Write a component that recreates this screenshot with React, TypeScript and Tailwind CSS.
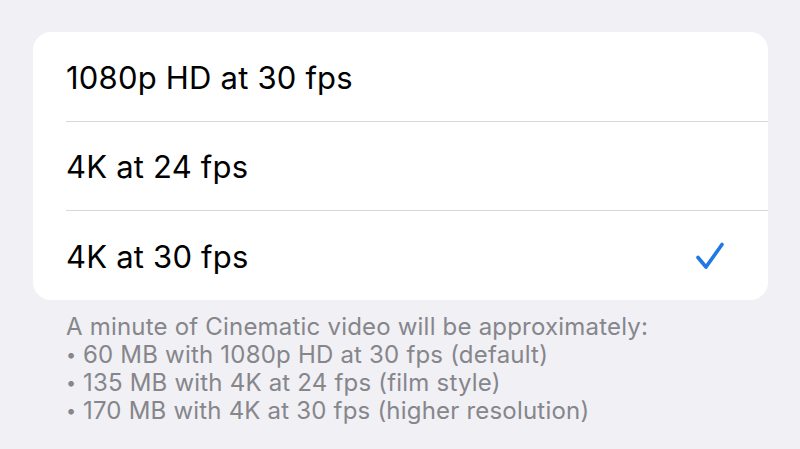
import React from 'react';

const options = [
  { label: '1080p HD at 30 fps', selected: false },
  { label: '4K at 24 fps', selected: false },
  { label: '4K at 30 fps', selected: true },
];

const notes = [
  '60 MB with 1080p HD at 30 fps (default)',
  '135 MB with 4K at 24 fps (film style)',
  '170 MB with 4K at 30 fps (higher resolution)',
];

export default function App() {
  return (
    <div
      className="w-[800px] h-[449px] overflow-hidden bg-[#f0f0f5] pt-[32px] pl-[33px] pr-[32px]"
      style={{ fontFamily: 'Inter, "Noto Sans", sans-serif' }}
    >
      {/* Options card */}
      <div className="bg-white rounded-[18px] overflow-hidden">
        {options.map((opt, idx) => (
          <div key={idx} className="pl-[33px]">
            <div
              className={
                'flex items-center justify-between pr-[43px] ' +
                (idx === 0 ? 'h-[90px] ' : 'h-[89px] ') +
                (idx < options.length - 1 ? 'border-b border-[#d8d8dc]' : '')
              }
            >
              <span className="text-[31px] text-black tracking-[0.2px] pt-[3px]">{opt.label}</span>
              {opt.selected && (
                <svg width="30" height="30" viewBox="0 0 30 30" fill="none">
                  <path
                    d="M3 16.5 L11 26 L27 3.5"
                    stroke="#1f78e3"
                    strokeWidth="3.6"
                    strokeLinecap="round"
                    strokeLinejoin="round"
                  />
                </svg>
              )}
            </div>
          </div>
        ))}
      </div>

      {/* Footer note */}
      <div className="pl-[33px] pt-[13px] text-[24px] leading-[28px] tracking-[0.2px] text-[#86868b]">
        <p>A minute of Cinematic video will be approximately:</p>
        {notes.map((n, i) => (
          <p key={i} className="flex">
            <span className="w-[17px] text-[18px]">•</span>
            <span>{n}</span>
          </p>
        ))}
      </div>
    </div>
  );
}
